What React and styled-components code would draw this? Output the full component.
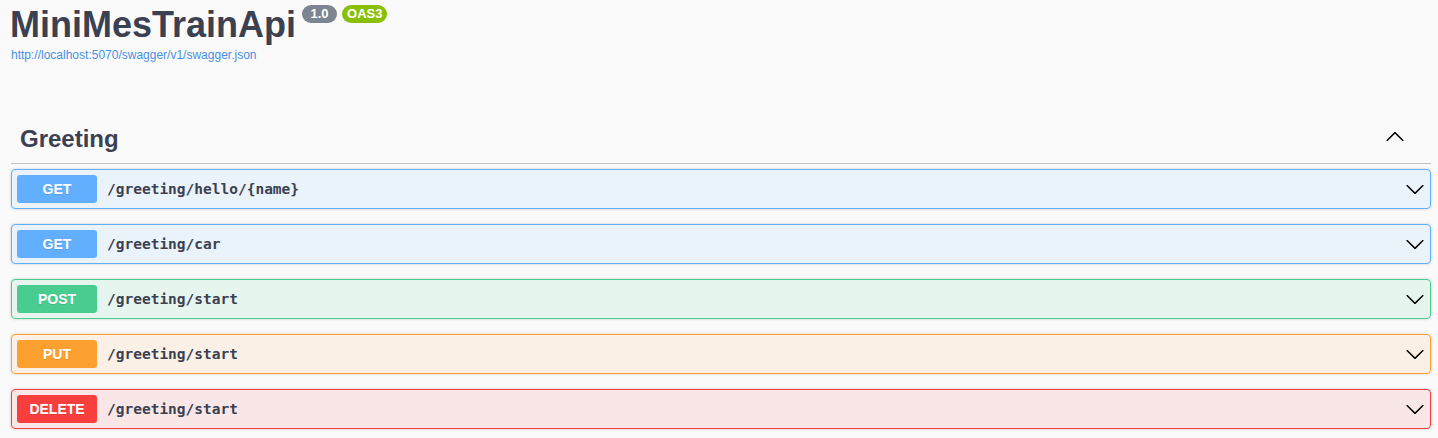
import React from 'react';
import styled, { createGlobalStyle } from 'styled-components';

const GlobalStyle = createGlobalStyle`
  body {
    margin: 0;
    background: #fafafa;
    font-family: "Liberation Sans", Arial, sans-serif;
    color: #3b4151;
  }
`;

const methods = {
  get: '#61affe',
  post: '#49cc90',
  put: '#fca130',
  delete: '#f93e3e',
};

const Wrapper = styled.div`
  padding: 4px 7px 0 11px;
`;

const TitleRow = styled.div`
  display: flex;
  align-items: flex-start;
  gap: 5px;
`;

const Title = styled.h2`
  margin: 0 1px 0 -1px;
  font-size: 36px;
  font-weight: 700;
  line-height: normal;
  color: #3b4151;
`;

const Stamp = styled.span`
  margin-top: 1px;
  min-width: 25px;
  height: 18px;
  padding: 0 5px;
  border-radius: 57px;
  background: ${(props) => props.color};
  color: #fff;
  font-size: 13px;
  font-weight: 700;
  line-height: 18px;
  text-align: center;
`;

const SpecLink = styled.a`
  display: block;
  margin-top: 2px;
  font-size: 12px;
  color: #4990e2;
  text-decoration: none;
`;

const Section = styled.section`
  margin-top: 52px;
`;

const TagHeader = styled.h3`
  display: flex;
  align-items: center;
  height: 49px;
  margin: 0 0 5px;
  padding: 0 26px 0 9px;
  border-bottom: 1px solid rgba(59, 65, 81, 0.3);
  font-size: 24px;
  font-weight: 700;
  color: #3b4151;
  span {
    flex: 1;
  }
  svg {
    margin-bottom: 5px;
  }
`;

const OpBlock = styled.div`
  display: flex;
  align-items: center;
  height: 28px;
  padding: 5px;
  margin-bottom: 15px;
  border: 1px solid ${(props) => props.color};
  border-radius: 4px;
  background: ${(props) => props.color + '1a'};
  box-shadow: 0 0 3px rgba(0, 0, 0, 0.19);
`;

const Method = styled.span`
  width: 80px;
  height: 28px;
  border-radius: 3px;
  background: ${(props) => props.color};
  color: #fff;
  font-size: 14px;
  font-weight: 700;
  line-height: 28px;
  text-align: center;
  text-shadow: 0 1px 0 rgba(0, 0, 0, 0.1);
`;

const Path = styled.span`
  flex: 1;
  margin-left: 10px;
  font-family: "DejaVu Sans Mono", monospace;
  font-size: 14.5px;
  font-weight: 700;
  color: #3b4151;
`;

const ChevronDown = () => (
  <svg width="20" height="20" viewBox="0 0 20 20">
    <path d="M17.418 6.109c.272-.268.709-.268.979 0s.271.701 0 .969l-7.908 7.83c-.27.268-.707.268-.979 0l-7.908-7.83c-.27-.268-.27-.701 0-.969.271-.268.709-.268.979 0L10 13.25l7.418-7.141z" />
  </svg>
);

const ChevronUp = () => (
  <svg width="20" height="20" viewBox="0 0 20 20">
    <path d="M17.418 14.908c.272.268.709.268.979 0s.271-.701 0-.969l-7.908-7.83c-.27-.268-.707-.268-.979 0l-7.908 7.83c-.27.268-.27.701 0 .969.271.268.709.268.979 0L10 7.749l7.418 7.159z" />
  </svg>
);

const operations = [
  { method: 'get', path: '/greeting/hello/{name}' },
  { method: 'get', path: '/greeting/car' },
  { method: 'post', path: '/greeting/start' },
  { method: 'put', path: '/greeting/start' },
  { method: 'delete', path: '/greeting/start' },
];

const App = () => {
  return (
    <Wrapper>
      <GlobalStyle />
      <TitleRow>
        <Title>MiniMesTrainApi</Title>
        <Stamp color="#7d8492">1.0</Stamp>
        <Stamp color="#89bf04">OAS3</Stamp>
      </TitleRow>
      <SpecLink href="#">http://localhost:5070/swagger/v1/swagger.json</SpecLink>
      <Section>
        <TagHeader>
          <span>Greeting</span>
          <ChevronUp />
        </TagHeader>
        {operations.map((op, i) => (
          <OpBlock key={i} color={methods[op.method]}>
            <Method color={methods[op.method]}>{op.method.toUpperCase()}</Method>
            <Path>{op.path}</Path>
            <ChevronDown />
          </OpBlock>
        ))}
      </Section>
    </Wrapper>
  );
};

export default App;
